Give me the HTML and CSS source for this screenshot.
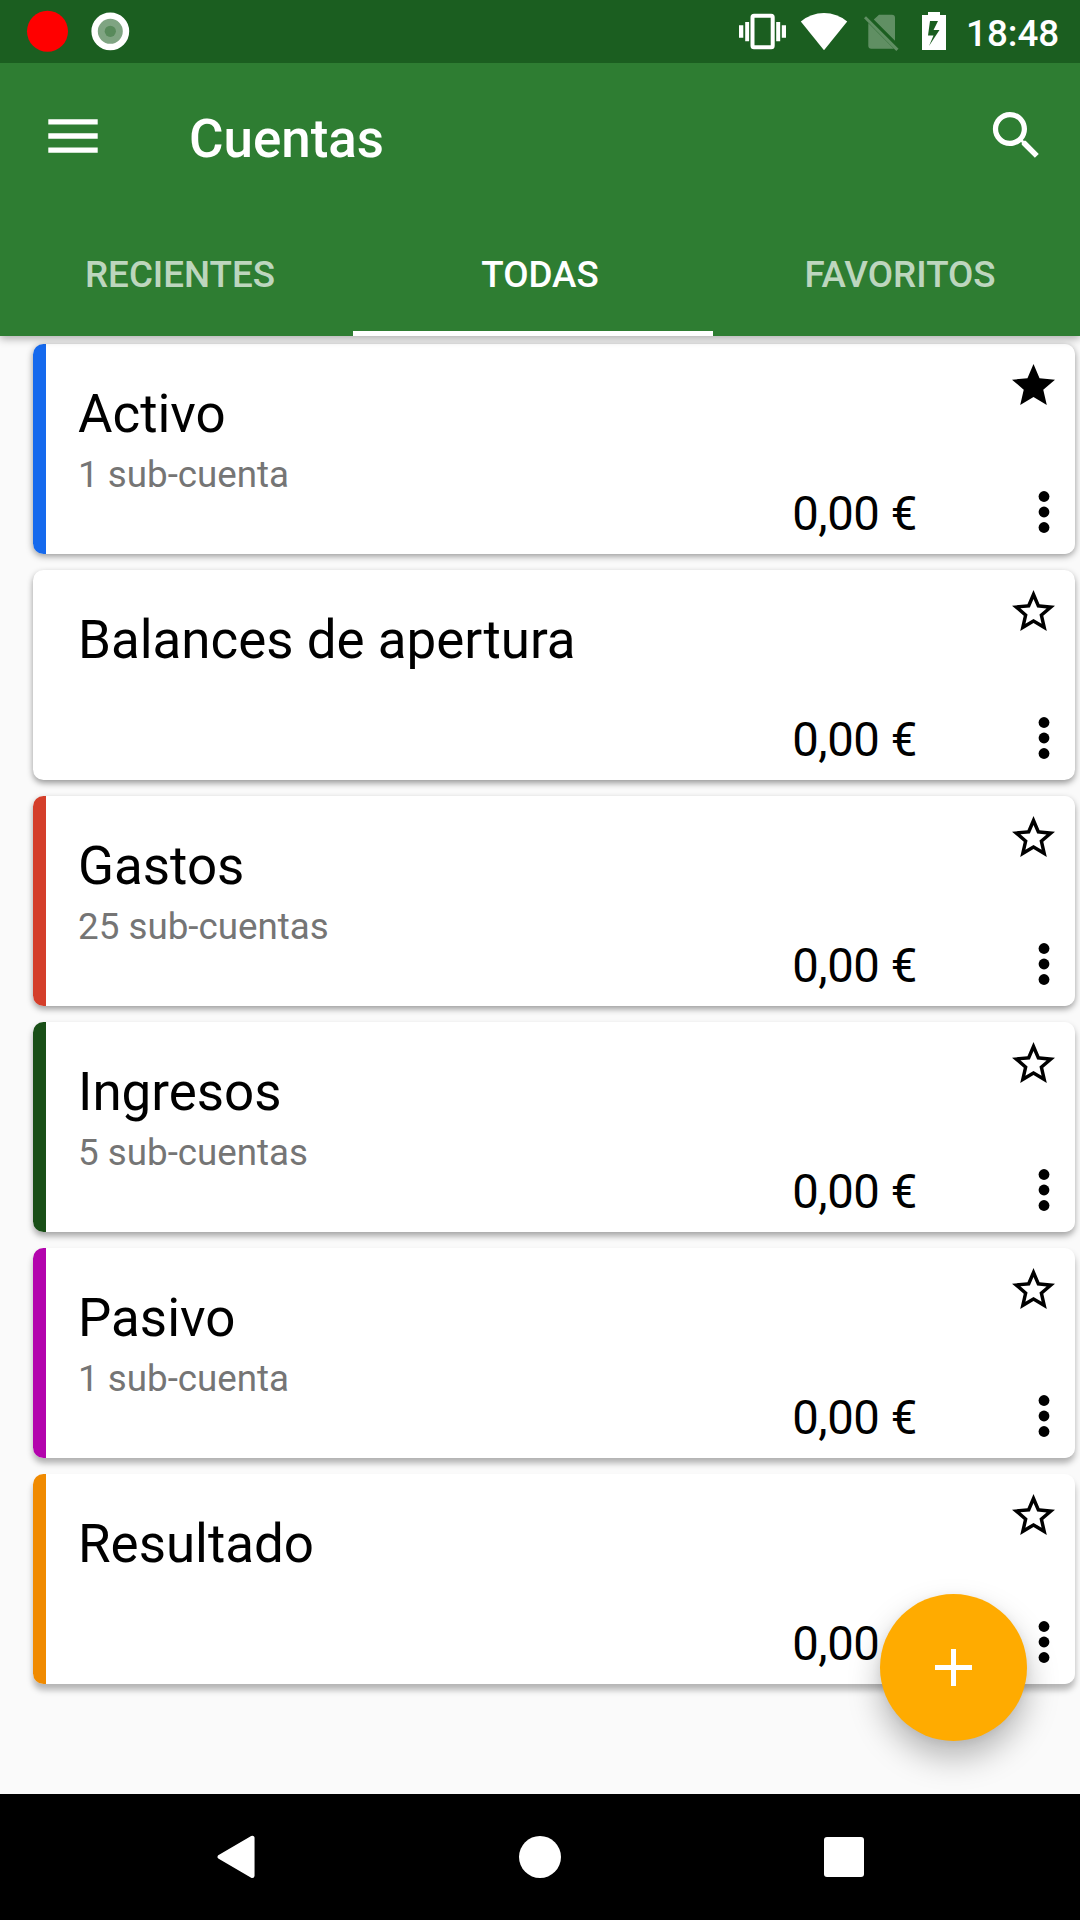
FILE: index.html
```html
<!DOCTYPE html>
<html lang="es">
<head>
<meta charset="utf-8">
<title>Cuentas</title>
<link rel="stylesheet" href="styles.css">
</head>
<body>
<svg class="defs" width="0" height="0" aria-hidden="true">
  <symbol id="star" viewBox="2 2 20 19"><path d="M12 17.27L18.18 21l-1.64-7.03L22 9.24l-7.19-.61L12 2 9.19 8.63 2 9.24l5.46 4.73L5.82 21z"/></symbol>
  <symbol id="star-outline" viewBox="2 2 20 19"><path d="M22 9.24l-7.19-.62L12 2 9.19 8.63 2 9.24l5.46 4.73L5.82 21 12 17.27 18.18 21l-1.63-7.03L22 9.24zM12 15.4l-3.76 2.27 1-4.28-3.32-2.88 4.38-.38L12 6.1l1.71 4.04 4.38.38-3.32 2.88 1 4.28L12 15.4z"/></symbol>
  <symbol id="more" viewBox="0 0 12 42"><circle cx="6" cy="5.5" r="5.4"/><circle cx="6" cy="21" r="5.4"/><circle cx="6" cy="36.5" r="5.4"/></symbol>
</svg>
<header class="header">
  <div class="status">
    <svg class="status-left" width="140" height="63" viewBox="0 0 140 63">
      <circle cx="47.5" cy="31.3" r="20.5" fill="#f00"/>
      <circle cx="110.3" cy="31.3" r="15.7" fill="#7fa482" stroke="#fff" stroke-width="6.4"/>
      <circle cx="110.3" cy="31.3" r="5.6" fill="#588a5b"/>
    </svg>
    <svg class="status-right" width="220" height="63" viewBox="730 0 220 63" fill="#fff">
      <path d="M739 25.3h4.3v12.4H739zM745.2 22h3.9v19.3h-3.9zM776.2 22h4v19.3h-4zM781.8 25.3h4.2v12.4h-4.2z"/>
      <rect x="752.5" y="15.8" width="20.2" height="31.4" rx="1.5" fill="none" stroke="#fff" stroke-width="4"/>
      <path d="M800.8 21.5Q811 13 824 13t23.2 8.5L824 50.2z"/>
      <g opacity=".3"><path d="M879 14.7h13q3 0 3 3v23.1l-21.2-21.2zM868.3 23l25.6 25.7H871.3q-3 0-3-3z"/><path d="M864 18.3l2-2 32.5 32.5-2.2 2.2z"/></g>
      <path fill-rule="evenodd" d="M928 12h12v3h6v35h-24V15h6zM930 21l-2 14.5h5.5l-4.500 10.500 10.500-16h-6l4.500-9z"/>
    </svg>
    <span class="clock">18:48</span>
  </div>
  <div class="toolbar">
    <svg class="menu" width="50" height="34" viewBox="0 0 50 34" fill="#fff"><path d="M.3.2h49.400v5.400H.3zM.3 14.300h49.400v5.400H.3zM.3 28.400h49.400v5.400H.3z"/></svg>
    <h1 class="title">Cuentas</h1>
    <svg class="search" width="63" height="63" viewBox="0 0 24 24" fill="#fff"><path d="M15.500 14h-.790l-.280-.270C15.410 12.590 16 11.110 16 9.500 16 5.910 13.090 3 9.500 3S3 5.910 3 9.500 5.910 16 9.500 16c1.610 0 3.090-.590 4.230-1.570l.270.280v.790l5 4.990L20.490 19l-4.990-5zm-6 0C7.010 14 5 11.990 5 9.500S7.010 5 9.500 5 14 7.010 14 9.500 11.990 14 9.500 14z"/></svg>
  </div>
  <nav class="tabs">
    <span class="tab">RECIENTES</span>
    <span class="tab active">TODAS</span>
    <span class="tab">FAVORITOS</span>
  </nav>
</header>
<main class="list">
  <article class="card c1 blue"><div class="info"><h2>Activo</h2><p>1 sub-cuenta</p></div><span class="balance">0,00 €</span><div class="actions"><svg class="star"><use href="#star"/></svg><svg class="more"><use href="#more"/></svg></div></article>
  <article class="card c2"><div class="info"><h2>Balances de apertura</h2></div><span class="balance">0,00 €</span><div class="actions"><svg class="star"><use href="#star-outline"/></svg><svg class="more"><use href="#more"/></svg></div></article>
  <article class="card c3 red"><div class="info"><h2>Gastos</h2><p>25 sub-cuentas</p></div><span class="balance">0,00 €</span><div class="actions"><svg class="star"><use href="#star-outline"/></svg><svg class="more"><use href="#more"/></svg></div></article>
  <article class="card c4 green"><div class="info"><h2>Ingresos</h2><p>5 sub-cuentas</p></div><span class="balance">0,00 €</span><div class="actions"><svg class="star"><use href="#star-outline"/></svg><svg class="more"><use href="#more"/></svg></div></article>
  <article class="card c5 purple"><div class="info"><h2>Pasivo</h2><p>1 sub-cuenta</p></div><span class="balance">0,00 €</span><div class="actions"><svg class="star"><use href="#star-outline"/></svg><svg class="more"><use href="#more"/></svg></div></article>
  <article class="card c6 orange"><div class="info"><h2>Resultado</h2></div><span class="balance">0,00 €</span><div class="actions"><svg class="star"><use href="#star-outline"/></svg><svg class="more"><use href="#more"/></svg></div></article>
  <button class="fab" aria-label="Añadir cuenta"><svg width="37" height="37" viewBox="0 0 37 37"><path d="M16 0h5v16h16v5H21v16h-5V21H0v-5h16z" fill="#fff"/></svg></button>
</main>
<footer class="navbar">
  <svg width="304" height="44" viewBox="84 1835 304 44"><path d="M252.300 1838v37.800L219.800 1856.900z" fill="#fff" stroke="#fff" stroke-width="4.500" stroke-linejoin="round"/></svg>
  <svg width="42" height="42" viewBox="0 0 42 42"><circle cx="21" cy="21" r="21" fill="#fff"/></svg>
  <svg width="304" height="42" viewBox="692 1836 304 42"><rect x="824" y="1837" width="40" height="40" rx="3" fill="#fff"/></svg>
</footer>
</body>
</html>
```
FILE: styles.css
```css
* { box-sizing: border-box; }
body {
  margin: 0;
  width: 1080px;
  height: 1920px;
  overflow: hidden;
  display: flex;
  flex-direction: column;
  background: #fafafa;
  font-family: Roboto, sans-serif;
  color: #000;
}
svg { display: block; flex: none; }
.defs { position: absolute; }
h1, h2, p { margin: 0; font-weight: 400; white-space: nowrap; }

.header {
  height: 336px;
  flex: none;
  background: #2e7d32;
  color: #fff;
  z-index: 1;
  box-shadow: 0 3px 8px rgba(0, 0, 0, .3);
}
.status {
  height: 63px;
  display: flex;
  background: #1b5e20;
}
.status-right { margin-left: 590px; }
.clock {
  margin-left: 16px;
  font-size: 36.75px;
  font-weight: 500;
  line-height: 67px;
}
.toolbar {
  height: 147px;
  display: flex;
  align-items: center;
  padding: 0 32px 2px 48px;
}
.title {
  flex: 1;
  margin-left: 91px;
  font-size: 52.9px;
  font-weight: 500;
  line-height: 62px;
  padding-top: 7px;
}
.tabs {
  height: 126px;
  display: grid;
  grid-template: 126px / 353px 360px 367px;
}
.tab {
  font-size: 36.75px;
  font-weight: 500;
  line-height: 130px;
  text-align: center;
  color: rgba(255, 255, 255, .7);
}
.tab:first-child { padding-left: 7px; }
.tab:last-child { padding-left: 7px; }
.tab.active {
  color: #fff;
  padding-left: 14px;
  box-shadow: inset 0 -5px #fff;
}

.list {
  position: relative;
  flex: 1;
  display: flex;
  flex-direction: column;
  gap: 16px;
  padding: 8px 5px 0 33px;
}
.card {
  height: 210px;
  flex: none;
  display: flex;
  border-radius: 10.5px;
  background: #fff;
}
.c1 { box-shadow: 0 2px 7px rgba(0, 0, 0, .42); }
.c2 { box-shadow: 0 3px 6px rgba(0, 0, 0, .4); }
.c3 { box-shadow: 0 3px 6px rgba(0, 0, 0, .38); }
.c4 { box-shadow: 0 4px 6px rgba(0, 0, 0, .34); }
.c5 { box-shadow: 0 5px 6px rgba(0, 0, 0, .3); }
.c6 { box-shadow: 0 6px 6px rgba(0, 0, 0, .28); }
.blue { background: linear-gradient(90deg, #1569ed 13px, #fff 13px); }
.red { background: linear-gradient(90deg, #d43e2a 13px, #fff 13px); }
.green { background: linear-gradient(90deg, #194f17 13px, #fff 13px); }
.purple { background: linear-gradient(90deg, #b304ad 13px, #fff 13px); }
.orange { background: linear-gradient(90deg, #f08a00 13px, #fff 13px); }
.info { flex: 1; padding: 39px 0 0 45px; }
.info h2 { font-size: 52.9px; line-height: 62px; }
.info p { font-size: 36.75px; line-height: 43px; margin-top: 8px; color: #757575; }
.balance {
  font-size: 47.25px;
  letter-spacing: -.4px;
  line-height: 56px;
  align-self: flex-end;
  padding-bottom: 12px;
}
.actions {
  width: 158px;
  display: flex;
  flex-direction: column;
  align-items: flex-end;
  justify-content: space-between;
  padding: 20px 20.5px 21px 0;
}
.star { width: 43px; height: 41px; }
.more { width: 12px; height: 42px; margin-right: 4.5px; }
.fab {
  position: absolute;
  right: 53px;
  bottom: 53px;
  width: 147px;
  height: 147px;
  border: 0;
  border-radius: 50%;
  display: grid;
  place-items: center;
  background: #ffab00;
  box-shadow: 0 17px 32px rgba(0, 0, 0, .27), 0 2px 10px rgba(0, 0, 0, .06);
}
.navbar {
  height: 126px;
  flex: none;
  display: flex;
  align-items: center;
  justify-content: space-between;
  padding: 0 84px;
  background: #000;
}
```
